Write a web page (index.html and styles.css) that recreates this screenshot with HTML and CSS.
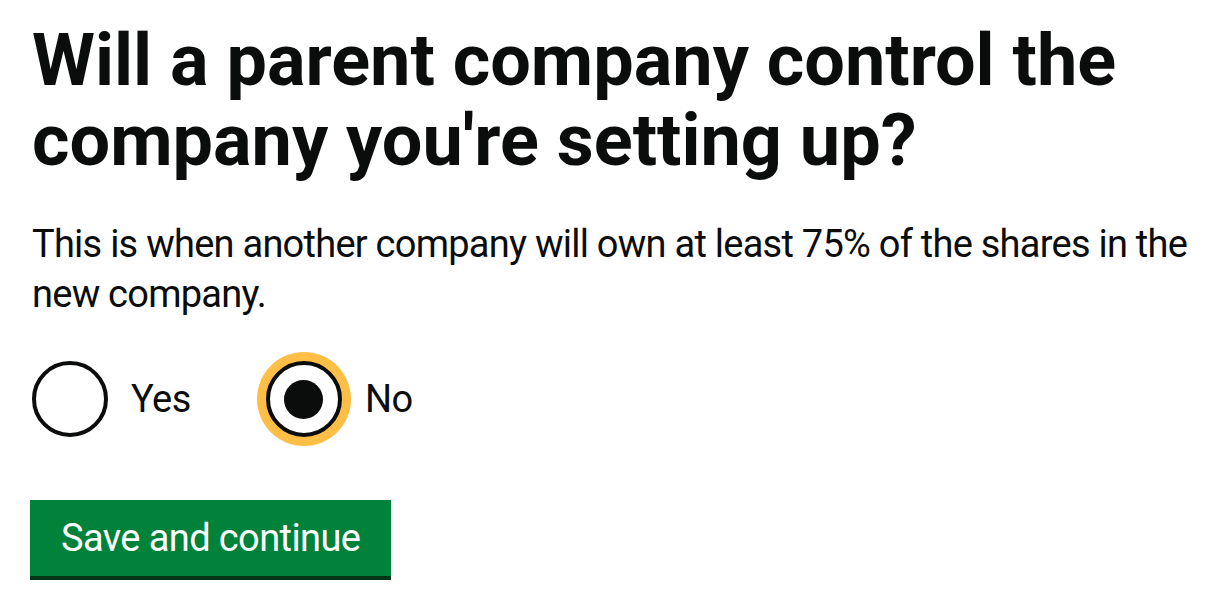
FILE: index.html
```html
<!DOCTYPE html>
<html lang="en">
<head>
<meta charset="utf-8">
<title>Will a parent company control the company you're setting up?</title>
<link rel="stylesheet" href="styles.css">
</head>
<body>
<main class="page">
  <form class="form">
    <fieldset class="fieldset">
      <legend class="legend"><h1 class="heading">Will a parent company control the company you're setting up?</h1></legend>
      <p class="hint">This is when another company will own at least 75% of the shares in the new company.</p>
      <div class="radios">
        <label class="radio">
          <input class="radio-input" type="radio" name="parent" value="yes">
          <span class="radio-circle"></span>
          <span class="radio-label">Yes</span>
        </label>
        <label class="radio">
          <input class="radio-input" type="radio" name="parent" value="no" checked>
          <span class="radio-circle is-checked is-focused"></span>
          <span class="radio-label">No</span>
        </label>
      </div>
    </fieldset>
    <button class="button" type="button">Save and continue</button>
  </form>
</main>
</body>
</html>
```
FILE: styles.css
```css
html, body {
  margin: 0;
  padding: 0;
  background: #ffffff;
}

body {
  font-family: Roboto, "Liberation Sans", Arial, sans-serif;
  color: #0b0c0c;
}

.page {
  padding: 21px 20px 0 32px;
}

.form {
  margin: 0;
}

.fieldset {
  margin: 0;
  padding: 0;
  border: 0;
  min-width: 0;
}

.legend {
  padding: 0;
  display: block;
}

.heading {
  margin: 0 0 38px;
  font-size: 72px;
  line-height: 80px;
  font-weight: 700;
  letter-spacing: 0;
}

.hint {
  margin: 0 0 42px;
  font-size: 38px;
  line-height: 50px;
  font-weight: 400;
  letter-spacing: -0.75px;
}

.radios {
  display: flex;
  align-items: center;
}

.radio {
  display: flex;
  align-items: center;
  margin-right: 75px;
  cursor: pointer;
}

.radio-input {
  position: absolute;
  opacity: 0;
  width: 0;
  height: 0;
  margin: 0;
}

.radio-circle {
  box-sizing: border-box;
  width: 76px;
  height: 76px;
  border: 4px solid #0b0c0c;
  border-radius: 50%;
  background: #ffffff;
  display: flex;
  align-items: center;
  justify-content: center;
  flex: none;
}

.radio-circle.is-checked::after {
  content: "";
  width: 39px;
  height: 39px;
  border-radius: 50%;
  background: #0b0c0c;
}

.radio-circle.is-focused {
  box-shadow: 0 0 0 9px #ffbf47;
}

.radio-label {
  padding-left: 23px;
  font-size: 38px;
  line-height: 50px;
  letter-spacing: -0.5px;
}

.button {
  display: block;
  box-sizing: border-box;
  margin: 63px 0 0 -2px;
  height: 80px;
  padding: 0 31px;
  border: 0;
  border-bottom: 4px solid #003618;
  border-radius: 0;
  background: #00823b;
  color: #ffffff;
  font-family: inherit;
  font-size: 38px;
  line-height: 76px;
  letter-spacing: -0.6px;
  cursor: pointer;
}
```
